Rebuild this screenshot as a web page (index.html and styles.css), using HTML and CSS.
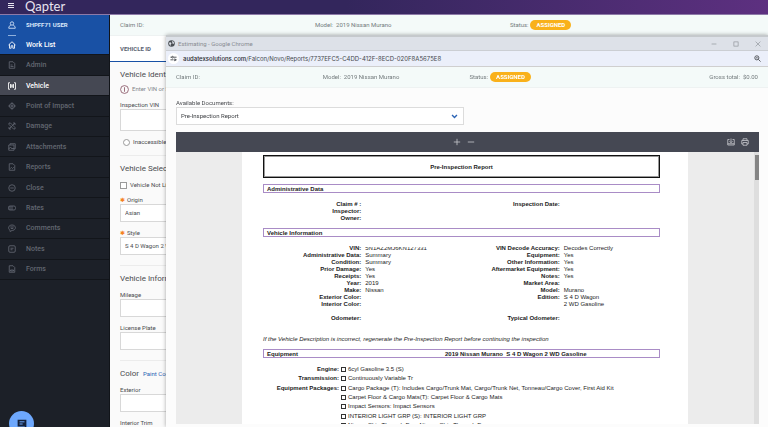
FILE: index.html
```html
<!DOCTYPE html>
<html lang="en">
<head>
  <meta charset="UTF-8">
  <meta name="viewport" content="width=device-width, initial-scale=1.0">
  <title>Qapter</title>
  <link rel="stylesheet" href="styles.css">
</head>
<body>
  <header class="topbar">
    <button class="menu-btn" aria-label="Menu"><span></span><span></span><span></span></button>
    <div class="brand">Qapter</div>
  </header>

  <div class="layout">
    <nav class="sidebar">
      <div class="user">
        <svg class="icon" viewBox="0 0 16 16"><circle cx="8" cy="5" r="3.4"/><path d="M5.5 8.5 C3 9.5 1.5 11 1.5 14.5 H14.5 C14.5 11 13 9.5 10.5 8.5"/></svg>
        <span>SHPFF71 USER</span>
      </div>
      <ul class="menu">
        <li><a class="home" href="#"><svg class="icon" viewBox="0 0 16 16"><path d="M1 8 L8 1.5 L15 8 M3 6.5 V14.5 H6.3 V9.5 H9.7 V14.5 H13 V6.5"/></svg>Work List</a></li>
        <li><a href="#"><svg class="icon" viewBox="0 0 16 16"><path d="M2.5 1.5 H10 L13.5 5 V14.5 H2.5 Z M5 8 H9 M5 11 H11"/></svg>Admin</a></li>
        <li><a class="active" href="#"><svg class="icon" viewBox="0 0 16 16"><path d="M4 1.5 H1 V14.5 H4 M12 1.5 H15 V14.5 H12 M5 4 V12 M8 4 V12 M11 4 V12 M5 8 H11"/></svg>Vehicle</a></li>
        <li><a href="#"><svg class="icon" viewBox="0 0 16 16"><circle cx="8" cy="8" r="5"/><circle cx="8" cy="8" r="1.5"/><path d="M8 0.5 V5 M8 11 V15.5 M0.5 8 H5 M11 8 H15.5"/></svg>Point of Impact</a></li>
        <li><a href="#"><svg class="icon" viewBox="0 0 16 16"><path d="M2 14 L14 2 M10 2 H14 V6 M2 10 V14 H6 M2 2 L5 2 L14 11 V14 H11 L2 5 Z"/></svg>Damage</a></li>
        <li><a href="#"><svg class="icon" viewBox="0 0 16 16"><path d="M4 4 V1.5 H14.5 V11.5 H12 M1.5 4 H12 V14.5 H1.5 Z M1.5 12 L5 8 L8 12 L10 10 L12 12"/></svg>Attachments</a></li>
        <li><a href="#"><svg class="icon" viewBox="0 0 16 16"><path d="M2.5 1.5 H10 L13.5 5 V14.5 H2.5 Z M4.5 11 L7 9 L9 11 L11.5 8.5"/></svg>Reports</a></li>
        <li><a href="#"><svg class="icon" viewBox="0 0 16 16"><circle cx="8" cy="8" r="6.5"/><path d="M4.5 8 H11.5"/></svg>Close</a></li>
        <li><a href="#"><svg class="icon" viewBox="0 0 16 16"><rect x="1" y="4" width="14" height="8" rx="3"/><path d="M1 6 H6 M1 10 H6 M8 4 V12"/></svg>Rates</a></li>
        <li><a href="#"><svg class="icon" viewBox="0 0 16 16"><path d="M4 12.5 C-1 9 1 2 8 2 C15 2 17 9 12 12 C10 13 9 12.5 8 13 L4 15 Z M4.5 6 H11.5 M5.5 9 H10.5"/></svg>Comments</a></li>
        <li><a href="#"><svg class="icon" viewBox="0 0 16 16"><rect x="1.5" y="1.5" width="13" height="13" rx="2.5"/><path d="M5 6.5 H11 M5 9.5 H9"/></svg>Notes</a></li>
        <li><a href="#"><svg class="icon" viewBox="0 0 16 16"><path d="M2.5 1.5 H10 L13.5 5 V14.5 H2.5 Z M5 10 V12 H11 V10 Z"/></svg>Forms</a></li>
      </ul>
    </nav>

    <main class="content">
      <div class="claim-bar claim-bar-main">
        <span>Claim ID:</span>
        <span>Model: &nbsp;2019 Nissan Murano</span>
        <span>Status: <b class="badge">ASSIGNED</b></span>
      </div>
      <div class="tabs"><a href="#">VEHICLE ID</a></div>

      <form class="form">
        <section>
          <h2>Vehicle Identification</h2>
          <p class="note">
            <svg viewBox="0 0 16 16"><circle cx="8" cy="8" r="7"/><path d="M8 4 V12"/></svg>
            Enter VIN or Select Vehicle
          </p>
          <label for="vin">Inspection VIN</label>
          <input class="field tall" id="vin" type="text">
          <div class="check"><input id="inaccessible" type="radio"><label for="inaccessible">Inaccessible</label></div>
        </section>
        <section>
          <h2>Vehicle Selection</h2>
          <div class="check"><input id="not-listed" type="checkbox"><label for="not-listed">Vehicle Not Listed</label></div>
          <label for="origin"><i class="required">✱</i>Origin</label>
          <select class="field" id="origin"><option>Asian</option></select>
          <label for="style"><i class="required">✱</i>Style</label>
          <select class="field" id="style"><option>S 4 D Wagon 2 WD Gasoline</option></select>
        </section>
        <section>
          <h2>Vehicle Information</h2>
          <label for="mileage">Mileage</label>
          <input class="field" id="mileage" type="text">
          <label for="plate">License Plate</label>
          <input class="field" id="plate" type="text">
        </section>
        <section>
          <h2>Color <a href="#">Paint Codes</a></h2>
          <label for="exterior">Exterior</label>
          <input class="field" id="exterior" type="text">
          <label for="trim">Interior Trim</label>
          <input class="field" id="trim" type="text">
        </section>
      </form>
    </main>
  </div>

  <button class="chat-btn" aria-label="Chat">
    <svg viewBox="0 0 16 16"><path d="M1 1 H15 V15 L12 12 H1 Z" fill="#14213b"/><path d="M4 4.5 H12 M4 8 H9" stroke="#6ea8fd" stroke-width="1.6"/></svg>
  </button>

  <!-- Report window -->
  <div class="window">
    <div class="title-bar">
      <svg class="globe" viewBox="0 0 16 16"><circle cx="8" cy="8" r="7.5" fill="#4b4f54"/><path d="M2 6 L6 5 L8 8 L6 10 L7 13 L4 12 Z M9 2 L13 4 L14 8 L11 9 L10 6 Z" fill="#dde1e8"/></svg>
      <span>Estimating - Google Chrome</span>
      <div class="window-btns">
        <button aria-label="Minimize"><svg viewBox="0 0 10 10"><path d="M1 5 H9"/></svg></button>
        <button aria-label="Maximize"><svg viewBox="0 0 10 10"><rect x="1.5" y="1.5" width="7" height="7"/></svg></button>
        <button aria-label="Close"><svg viewBox="0 0 10 10"><path d="M1 1 L9 9 M9 1 L1 9"/></svg></button>
      </div>
    </div>
    <div class="address-bar">
      <button class="site-btn" aria-label="Site information"><svg viewBox="0 0 16 16"><path d="M1 5 H5 M9 5 H15 M1 11 H7 M11 11 H15"/><circle cx="6" cy="5" r="2"/><circle cx="11" cy="11" r="2"/></svg></button>
      <span class="url"><b>audatexsolutions.com</b>/Falcon/Novo/Reports/7737EFC5-C4DD-412F-8ECD-020F8A5675E8</span>
      <button class="zoom-btn" aria-label="Zoom"><svg viewBox="0 0 16 16"><circle cx="6.5" cy="6.5" r="4.7"/><path d="M10 10 L15 15 M4.5 6.5 H8.5"/></svg></button>
    </div>
    <div class="claim-bar claim-bar-window">
      <span>Claim ID:</span>
      <span>Model: &nbsp;2019 Nissan Murano</span>
      <span>Status: <b class="badge">ASSIGNED</b></span>
      <span class="total">Gross total: &nbsp;$0.00</span>
    </div>

    <div class="window-body">
      <label for="documents">Available Documents:</label>
      <div class="documents">
        <select id="documents"><option>Pre-Inspection Report</option></select>
        <svg viewBox="0 0 10 10"><path d="M1.5 3 L5 6.5 L8.5 3"/></svg>
      </div>

      <div class="toolbar">
        <div class="zoom-tools">
          <button aria-label="Zoom in"><svg viewBox="0 0 10 10"><path d="M5 1 V9 M1 5 H9"/></svg></button>
          <button aria-label="Zoom out"><svg viewBox="0 0 10 10"><path d="M1 5 H9"/></svg></button>
        </div>
        <div class="file-tools">
          <button aria-label="Download"><svg viewBox="0 0 16 16"><path d="M5 3 H1.5 V14 H14.5 V3 H11 M8 1 V9 M5 6.5 L8 9.5 L11 6.5 M1.5 11.5 H14.5"/></svg></button>
          <button aria-label="Print"><svg viewBox="0 0 16 16"><path d="M4 5 V1.5 H12 V5 M4 12 H1.5 V5 H14.5 V12 H12 M4 9 H12 V14.5 H4 Z"/></svg></button>
        </div>
      </div>

      <div class="viewer">
        <div class="canvas">
          <article class="report">
            <h1>Pre-Inspection Report</h1>
            <h3>Administrative Data</h3>
            <dl class="data">
              <dt>Claim # :</dt><dd></dd><dt>Inspection Date:</dt><dd></dd>
              <dt>Inspector:</dt><dd></dd><dt></dt><dd></dd>
              <dt>Owner:</dt><dd></dd><dt></dt><dd></dd>
            </dl>
            <h3>Vehicle Information</h3>
            <dl class="data">
              <dt>VIN:</dt><dd class="vin">5N1AZ2MJ6KN127331</dd><dt>VIN Decode Accuracy:</dt><dd>Decodes Correctly</dd>
              <dt>Administrative Data:</dt><dd>Summary</dd><dt>Equipment:</dt><dd>Yes</dd>
              <dt>Condition:</dt><dd>Summary</dd><dt>Other Information:</dt><dd>Yes</dd>
              <dt>Prior Damage:</dt><dd>Yes</dd><dt>Aftermarket Equipment:</dt><dd>Yes</dd>
              <dt>Receipts:</dt><dd>Yes</dd><dt>Notes:</dt><dd>Yes</dd>
              <dt>Year:</dt><dd>2019</dd><dt>Market Area:</dt><dd></dd>
              <dt>Make:</dt><dd>Nissan</dd><dt>Model:</dt><dd>Murano</dd>
              <dt>Exterior Color:</dt><dd></dd><dt>Edition:</dt><dd>S 4 D Wagon</dd>
              <dt>Interior Color:</dt><dd></dd><dt></dt><dd>2 WD Gasoline</dd>
              <dt></dt><dd></dd><dt></dt><dd></dd>
              <dt>Odometer:</dt><dd></dd><dt>Typical Odometer:</dt><dd></dd>
            </dl>
            <p class="hint">If the Vehicle Description is incorrect, regenerate the Pre-Inspection Report before continuing the inspection</p>
            <h3 class="equipment-title"><span>Equipment</span><span>2019 Nissan Murano &nbsp;S 4 D Wagon 2 WD Gasoline</span></h3>
            <div class="equipment">
              <b>Engine:</b><label><input type="checkbox">6cyl Gasoline 3.5 (S)</label>
              <b>Transmission:</b><label><input type="checkbox">Continuously Variable Tr</label>
              <b>Equipment Packages:</b><label><input type="checkbox">Cargo Package (T): Includes Cargo/Trunk Mat, Cargo/Trunk Net, Tonneau/Cargo Cover, First Aid Kit</label>
              <b></b><label><input type="checkbox">Carpet Floor &amp; Cargo Mats(T): Carpet Floor &amp; Cargo Mats</label>
              <b></b><label><input type="checkbox">Impact Sensors: Impact Sensors</label>
              <b></b><label><input type="checkbox">INTERIOR LIGHT GRP (S): INTERIOR LIGHT GRP</label>
              <b></b><label><input type="checkbox">Nissan Ship Through Eqp: Nissan Ship Through Eqp</label>
            </div>
          </article>
        </div>
        <div class="scrollbar"><div class="thumb"></div></div>
      </div>
    </div>
  </div>
</body>
</html>
```
FILE: styles.css
```css
* {
  box-sizing: border-box;
}
body {
  margin: 0;
  height: 100vh;
  overflow: hidden;
  display: flex;
  flex-direction: column;
  font-family: Roboto, sans-serif;
  font-size: 6px;
  line-height: 8px;
  color: #4a4c50;
  background: #fafafa;
}
h1, h2, h3, p, ul, dl, dd {
  margin: 0;
  padding: 0;
}
button {
  padding: 0;
  border: 0;
  background: none;
  color: inherit;
  display: flex;
  align-items: center;
  justify-content: center;
}
a {
  text-decoration: none;
}
svg {
  fill: none;
  stroke: currentColor;
}

/* Top bar */
.topbar {
  flex: none;
  height: 15px;
  display: flex;
  align-items: center;
  gap: 11px;
  padding: 0 8px 3px;
  background: linear-gradient(90deg, #33265c 45%, #5d3080);
  border-bottom: 1px solid #8d7aa8;
  color: #e8e4f0;
}
.menu-btn {
  width: 6px;
  flex-direction: column;
  gap: 1px;
}
.menu-btn span {
  width: 6px;
  height: 1px;
  background: #e8e4f0;
}
.brand {
  font-family: Lato, sans-serif;
  font-size: 13px;
  line-height: 12px;
}

.layout {
  flex: 1;
  min-height: 0;
  display: flex;
}

/* Sidebar */
.sidebar {
  flex: none;
  width: 110px;
  background: #1c2028;
  border-right: 1px solid #111419;
}
.user {
  height: 20px;
  display: flex;
  align-items: center;
  gap: 10px;
  padding-left: 8px;
  background: #1951a5;
  color: #dce8fa;
  font-size: 6px;
  font-weight: 700;
}
.icon {
  flex: none;
  width: 8px;
  height: 8px;
  stroke-width: 1.7;
}
.menu {
  list-style: none;
  height: 245px;
  display: grid;
  grid-auto-rows: 1fr;
}
.menu li {
  display: flex;
  border-bottom: 1px solid #12151a;
}
.menu a {
  flex: 1;
  display: flex;
  align-items: center;
  gap: 10px;
  padding-left: 8px;
  font-size: 7px;
  font-weight: 500;
  color: #626771;
}
.menu .home {
  position: relative;
  background: #1951a5;
  color: #fff;
}
.menu .home::before {
  content: "";
  position: absolute;
  top: 0;
  left: 8px;
  width: 8px;
  height: 1px;
  background: #8fb0dc;
}
.menu .active {
  background: #454853;
  color: #fff;
}

/* Claim bar */
.claim-bar {
  flex: none;
  height: 21px;
  display: grid;
  align-items: center;
  padding: 0 10px;
  background: #f4faf9;
  color: #737b7d;
  border-bottom: 1px solid #eef2f2;
}
.claim-bar span {
  display: flex;
  align-items: center;
  gap: 2px;
}
.claim-bar-main {
  grid-template-columns: 11fr 11fr 14fr;
}
.claim-bar-window {
  grid-template-columns: repeat(4, 1fr);
  column-gap: 5px;
}
.claim-bar .total {
  justify-content: flex-end;
}
.badge {
  padding: 1px 6px;
  border-radius: 5px;
  background: #f9b11b;
  color: #fff;
}

/* Main content */
.content {
  flex: 1;
  min-width: 0;
  overflow: hidden;
}
.tabs {
  height: 26px;
  display: flex;
  background: #fff;
}
.tabs a {
  display: flex;
  align-items: center;
  width: 80px;
  padding-left: 10px;
  border-bottom: 1px solid #1951a5;
  color: #5b6472;
  font-weight: 700;
}
.form section {
  display: flex;
  flex-direction: column;
  margin: 0 10px;
  padding: 8px 0 10px;
  border-bottom: 1px solid #ececec;
}
.form section:first-child {
  padding-bottom: 9px;
}
.form h2 {
  font-size: 8px;
  line-height: 10px;
  font-weight: 400;
}
.form h2 a {
  margin-left: 2px;
  font-size: 6px;
  color: #2b63b4;
}
.note {
  display: flex;
  align-items: center;
  gap: 3px;
  margin-top: 4px;
  line-height: 10px;
  color: #85878a;
}
.note svg {
  width: 9px;
  height: 9px;
  stroke: #8a5566;
  stroke-width: 1.5;
}
.form section > label {
  margin-top: 7px;
}
.required {
  margin-right: 2px;
  color: #f5821f;
  font-style: normal;
}
.field {
  flex: none;
  width: 100%;
  height: 18px;
  padding: 0 4px;
  appearance: none;
  border: 1px solid #d8d8d8;
  border-radius: 0;
  background: #fff;
  font: inherit;
  color: inherit;
}
.tall {
  height: 22px;
}
.check {
  display: flex;
  align-items: center;
  gap: 3px;
  margin-top: 7px;
}
.check input {
  appearance: none;
  width: 7px;
  height: 7px;
  margin: 0;
  border: 1px solid #9a9a9a;
  background: #fff;
}
.check input[type="radio"] {
  margin-left: 3px;
  border-radius: 50%;
}

/* Chat */
.chat-btn {
  position: fixed;
  left: 9px;
  bottom: -9px;
  width: 25px;
  height: 25px;
  border-radius: 50%;
  background: #6ea8fd;
}
.chat-btn svg {
  width: 10px;
  height: 10px;
  stroke: none;
}

/* Report window */
.window {
  position: fixed;
  top: 35px;
  left: 166px;
  right: 0;
  bottom: 0;
  display: flex;
  flex-direction: column;
  background: #fcfcfc;
  border-top: 2px solid #c5c9cc;
  box-shadow: 0 0 4px rgba(0, 0, 0, 0.35);
}
.title-bar {
  flex: none;
  height: 14px;
  display: flex;
  align-items: center;
  gap: 3px;
  padding: 0 7px 0 2px;
  background: #dde1e8;
  border-bottom: 1px solid #cbced3;
  color: #888c92;
}
.globe {
  width: 7px;
  height: 7px;
  stroke: none;
}
.window-btns {
  margin-left: auto;
  display: flex;
  gap: 16px;
  color: #85898f;
}
.window-btns svg {
  width: 6px;
  height: 6px;
}
.address-bar {
  flex: none;
  height: 16px;
  display: flex;
  align-items: center;
  gap: 4px;
  padding: 0 7px 0 2px;
  background: #ebeffa;
  border-bottom: 1px solid #cfcfcf;
  color: #45484d;
  font-family: Inter, sans-serif;
}
.site-btn {
  width: 11px;
  height: 11px;
  border-radius: 50%;
  background: #fff;
}
.site-btn svg, .zoom-btn svg {
  width: 7px;
  height: 7px;
  stroke-width: 2;
}
.url b {
  font-weight: 500;
  color: #26282c;
}
.zoom-btn {
  margin-left: auto;
}
.window-body {
  flex: 1;
  min-height: 0;
  display: flex;
  flex-direction: column;
  padding: 11px 9px 3px 10px;
}
.documents {
  position: relative;
  width: 288px;
  margin-bottom: 7px;
}
.documents select {
  display: block;
  width: 100%;
  height: 18px;
  padding: 0 4px;
  appearance: none;
  border: 1px solid #dcdcdc;
  border-radius: 0;
  background: #fff;
  font: inherit;
  color: #3c3e42;
}
.documents svg {
  position: absolute;
  top: 6px;
  right: 6px;
  width: 7px;
  height: 7px;
  stroke: #2b63b4;
  stroke-width: 2;
}
.toolbar {
  flex: none;
  height: 20px;
  display: grid;
  grid-template-columns: 1fr auto 1fr;
  align-items: center;
  padding: 0 10px 0 2px;
  background: #454853;
  color: #c6c8cd;
}
.zoom-tools, .file-tools {
  display: flex;
  gap: 6px;
}
.zoom-tools {
  grid-column: 2;
}
.file-tools {
  justify-self: end;
}
.toolbar svg {
  width: 8px;
  height: 8px;
}
.file-tools svg {
  stroke-width: 1.6;
}

/* Document viewer */
.viewer {
  flex: 1;
  min-height: 0;
  display: flex;
  background: #ececec;
}
.canvas {
  flex: 1;
  padding: 0 66px;
  overflow: hidden;
}
.scrollbar {
  width: 5px;
  padding: 3px 0 0 1px;
  background: #dedede;
}
.thumb {
  height: 25px;
  background: #858585;
}
.report {
  padding: 3px 28px 0 21px;
  background: #fff;
  color: #1c1c1c;
  font-family: "Liberation Sans", Arial, sans-serif;
  line-height: 7px;
}
.report h1, .report h3 {
  font-size: 6px;
}
.report h1 {
  height: 23px;
  margin-bottom: 6px;
  border: 1px solid #111;
  outline: 1px solid #999;
  outline-offset: -2px;
  line-height: 22px;
  text-align: center;
}
.report h3 {
  height: 9px;
  padding: 1px 3px 0;
  border: 1px solid #a98cc6;
}
.data {
  display: grid;
  grid-template-columns: repeat(4, 1fr);
  grid-auto-rows: 7px;
  margin: 8px 0 6px;
}
.data dt {
  padding-right: 1px;
  text-align: right;
  font-weight: 700;
}
.data dd {
  padding-left: 3px;
}
.vin {
  clip-path: inset(2px 0 0 0);
}
.hint {
  margin: 14px 0 6px;
  font-style: italic;
}
.equipment-title {
  display: flex;
  gap: 147px;
}
.equipment {
  display: grid;
  grid-template-columns: 76px 1fr;
  grid-auto-rows: 1fr;
  align-items: center;
  height: 65px;
  column-gap: 2px;
  margin-top: 7px;
}
.equipment b {
  text-align: right;
}
.equipment label {
  display: flex;
  align-items: center;
  gap: 2px;
  white-space: nowrap;
}
.equipment input {
  appearance: none;
  width: 5px;
  height: 5px;
  margin: 0;
  border: 1px solid #333;
}
```
